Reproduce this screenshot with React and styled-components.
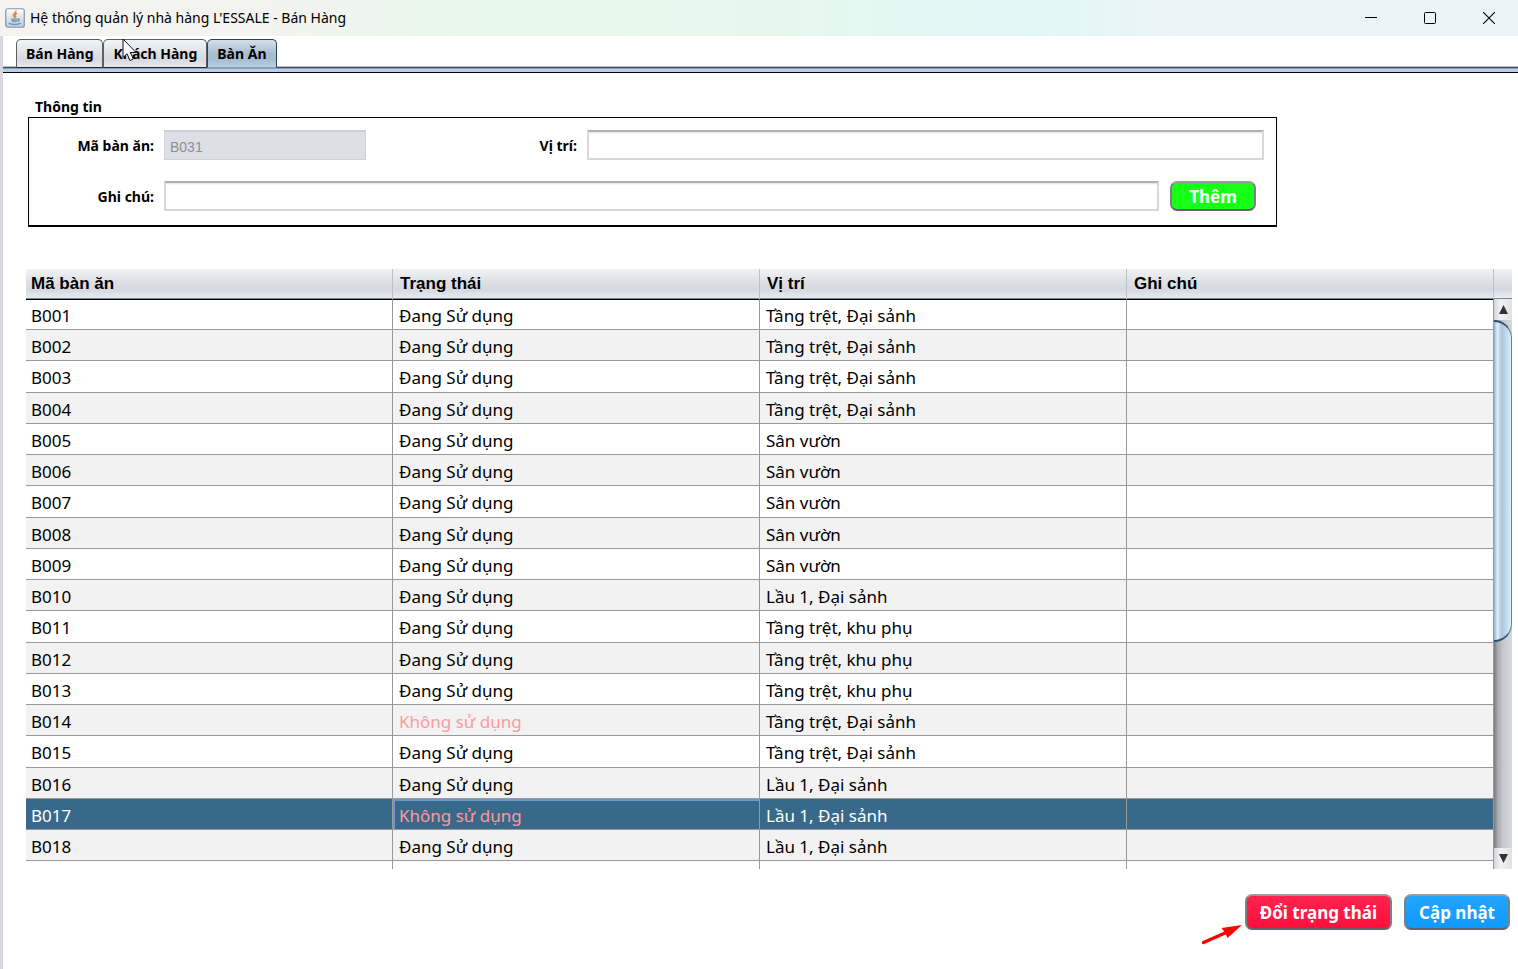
import React from 'react';
import styled, { createGlobalStyle } from 'styled-components';

const Global = createGlobalStyle`
  *, *::before, *::after { box-sizing: border-box; }
  body { margin: 0; background: #fff; color: #000; font-family: "Noto Sans", "Open Sans", sans-serif; }
  button, input { font-family: inherit; }
`;

const Window = styled.div`
  position: relative;
  display: flex;
  flex-direction: column;
  min-height: 100vh;
`;

const TitleBar = styled.header`
  display: flex;
  align-items: center;
  height: 36px;
  padding-left: 5px;
  background: linear-gradient(90deg, #f4f3f0 0%, #f3f3f0 18%, #e8f8ec 30%, #e6f8ee 52%, #e1f8f8 68%, #ebf4f8 77%, #ebf4f8 100%);
`;

const Title = styled.h1`
  flex: 1;
  margin: 0 0 0 5px;
  font-size: 14px;
  line-height: 20px;
  font-weight: 400;
  white-space: nowrap;
`;

const WindowButton = styled.button`
  display: flex;
  align-items: center;
  justify-content: center;
  width: 59px;
  height: 34px;
  padding: 0;
  border: 0;
  background: transparent;
`;

const Content = styled.main`
  flex: 1;
  display: flex;
  flex-direction: column;
  border-left: 3px solid #d6d9e1;
`;

const Tabs = styled.nav`
  display: flex;
  height: 37px;
  padding: 3px 0 0 13px;
  background: linear-gradient(#fff 0 30px, #b9bfc8 30px 31px, #3f4c5e 31px 32px, #8ca0b5 32px 33px, #b8cfe5 33px 36px, #000010 36px 37px);
`;

const Tab = styled.button`
  height: 29px;
  padding: 0 9px;
  border: 1px solid ${(p) => (p.$active ? '#2e4258' : '#5c5f68')};
  border-bottom-color: ${(p) => (p.$active ? '#8ca0b5' : '#20283a')};
  border-radius: 5px 5px 0 0;
  background: ${(p) => (p.$active
    ? 'linear-gradient(#d3e0ea, #a9bed1 50%, #a5bbce 70%, #b9d0e4)'
    : 'linear-gradient(#f3f4f6, #dfe0e5 50%, #d8d9df 70%, #e6e8ef)')};
  color: #000;
  font-size: 14px;
  line-height: 20px;
  font-weight: 700;
`;

const Fieldset = styled.fieldset`
  min-width: 0;
  margin: 24px 241px 0 25px;
  padding: 0;
  border: 0;
`;

const Legend = styled.legend`
  padding: 0 0 0 7px;
  font-size: 14px;
  line-height: 20px;
  font-weight: 700;
`;

const FormBody = styled.div`
  display: flex;
  flex-direction: column;
  gap: 21px;
  padding: 12px 0 14px;
  border: 1px solid #000;
  border-bottom-width: 2px;
`;

const FormRow = styled.div`
  display: flex;
  align-items: center;
  padding-right: ${(p) => p.$end}px;
`;

const Label = styled.label`
  flex: none;
  width: ${(p) => p.$width}px;
  margin-right: 10px;
  padding-top: 2px;
  text-align: right;
  font-size: 14px;
  line-height: 20px;
  font-weight: 700;
`;

const TextInput = styled.input`
  flex: ${(p) => (p.$width ? `0 0 ${p.$width}px` : '1')};
  min-width: 0;
  height: 30px;
  padding: 2px 5px 0;
  border: 2px solid #d8d8d8;
  border-top-color: #b0b0b0;
  background: linear-gradient(#e2e2e2, #fff 2px);
  font-size: 14px;

  &:disabled {
    border: 1px solid #cfd3d9;
    border-top: 2px solid #c9cdd4;
    background: #dce0e6;
    color: #8e8f91;
    font-family: "Liberation Sans", Arial, sans-serif;
  }
`;

const ActionButton = styled.button`
  height: ${(p) => p.$height}px;
  padding: 1px ${(p) => p.$pad}px 0;
  border: 2px solid;
  border-color: #9b9b9b #7d8187 #62666d;
  border-radius: 7px;
  background: ${(p) => p.$color};
  color: #fff;
  font-size: 17px;
  line-height: 20px;
  font-weight: 700;
  white-space: nowrap;
`;

const AddButton = styled(ActionButton)`
  width: 86px;
  margin-left: 11px;
`;

const TablePane = styled.section`
  display: flex;
  margin: 42px 6px 0 23px;
`;

const Table = styled.table`
  flex: 1;
  width: 100%;
  table-layout: fixed;
  border-collapse: separate;
  border-spacing: 0;
`;

const headerFill = 'linear-gradient(#f1f2f4, #dcdfe3 45%, #d5d9df 70%, #e9edf6)';

const HeadCell = styled.th`
  height: 31px;
  padding: 0 0 0 7px;
  border-right: 1px solid #bfc1c6;
  border-bottom: 1px solid #000;
  background: ${headerFill};
  box-shadow: inset 0 -1px #80848c;
  text-align: left;
  font-family: "Liberation Sans", Arial, sans-serif;
  font-size: 17px;
  line-height: 20px;
  font-weight: 700;

  &:first-child { padding-left: 5px; }
`;

const Row = styled.tr`
  height: 31px;
  background: ${(p) => (p.$selected ? '#39698a' : '#fff')};
  color: ${(p) => (p.$selected ? '#fff' : '#000')};

  &:first-child { height: 30px; }
  &:nth-child(4n + 3) { height: 32px; }
  &:nth-child(even) { background: #f2f2f2; }
`;

const Cell = styled.td`
  padding: 3px 0 0 6px;
  border-right: 1px solid #999;
  border-bottom: 1px solid #999;
  ${(p) => p.$unused && 'color: #fd9b9b;'}
  ${(p) => p.$focused && 'box-shadow: inset 2px 2px #6c99c9;'}
  font-size: 17px;
  line-height: 24px;
  white-space: nowrap;

  &:first-child { padding-left: 5px; }
`;

const FillerCell = styled.td`
  height: 8px;
  padding: 0;
  border-right: 1px solid #999;
`;

const ScrollColumn = styled.div`
  display: flex;
  flex-direction: column;
  width: 18px;
`;

const ScrollCap = styled.div`
  height: 30px;
  border-bottom: 1px solid #80848c;
  background: ${headerFill};
`;

const Track = styled.div`
  flex: 1;
  display: flex;
  flex-direction: column;
  background: linear-gradient(90deg, #77787e, #a9aab1 20%, #c6c7cf 50%, #d6d8e0);
`;

const ArrowButton = styled.button`
  display: flex;
  align-items: center;
  justify-content: center;
  height: 21px;
  padding: 0;
  border: 0;
  background: linear-gradient(90deg, #d3d5da, #f1f2f4 35%, #dfe1e5);
`;

const Thumb = styled.div`
  height: 322px;
  border: 2px solid #30506f;
  border-left: 0;
  border-right: 1px solid #6483a3;
  border-radius: 0 18px 18px 0;
  background: linear-gradient(90deg, #8fb0d0, #e4eef7 20%, #a9c4dd 45%, #b9d3e8 65%, #dceffa);
`;

const Spacer = styled.div`
  flex: 1;
`;

const Actions = styled.footer`
  display: flex;
  align-items: flex-start;
  gap: 12px;
  justify-content: flex-end;
  padding: 25px 8px 25px 0;
`;

const Pointed = styled.div`
  display: flex;
  gap: 2px;
`;

const RedArrow = styled.svg`
  margin-top: 28px;
`;

const Cursor = styled.svg`
  position: absolute;
  left: 122px;
  top: 38px;
`;

const JavaIcon = () => (
  <svg width="20" height="20" viewBox="0 0 20 20" aria-hidden="true">
    <defs>
      <linearGradient id="java" x1="0" y1="0" x2="0" y2="1">
        <stop offset="0" stopColor="#fdfdfd" />
        <stop offset="1" stopColor="#bccbd8" />
      </linearGradient>
    </defs>
    <rect x="0.75" y="0.75" width="18.5" height="18.5" rx="2" fill="url(#java)" stroke="#8496a6" strokeWidth="1.2" />
    <path d="M10.8 2.600c.8 2-3.600 3.200-2.300 5.200.4.8 1 1.200 1.300 1.900M12.200 5.300c-1.800.8-2.800 1.500-1.700 2.700.5.7.2 1.300-.4 1.800" fill="none" stroke="#e8853b" strokeWidth="1.500" />
    <path d="M6 10.600h6.500c0 2.200-.8 3.700-2.200 3.700H8.200C6.800 14.300 6 12.800 6 10.600z" fill="#7ba3c0" />
    <path d="M12.600 10.900c2.400-.3 2.100 2-.4 2.500M3.800 15c2.500 1.900 9 1.900 12 0" fill="none" stroke="#6b97b8" strokeWidth="1.400" />
  </svg>
);

const USED = 'Đang Sử dụng';
const UNUSED = 'Không sử dụng';
const GROUND = 'Tầng trệt, Đại sảnh';
const GARDEN = 'Sân vườn';
const ANNEX = 'Tầng trệt, khu phụ';
const FLOOR1 = 'Lầu 1, Đại sảnh';

const rows = [
  ['B001', USED, GROUND], ['B002', USED, GROUND], ['B003', USED, GROUND], ['B004', USED, GROUND],
  ['B005', USED, GARDEN], ['B006', USED, GARDEN], ['B007', USED, GARDEN], ['B008', USED, GARDEN], ['B009', USED, GARDEN],
  ['B010', USED, FLOOR1], ['B011', USED, ANNEX], ['B012', USED, ANNEX], ['B013', USED, ANNEX],
  ['B014', UNUSED, GROUND], ['B015', USED, GROUND], ['B016', USED, FLOOR1], ['B017', UNUSED, FLOOR1], ['B018', USED, FLOOR1],
];
const selected = 'B017';

export default function App() {
  return (
    <Window>
      <Global />
      <TitleBar>
        <JavaIcon />
        <Title>Hệ thống quản lý nhà hàng L'ESSALE - Bán Hàng</Title>
        <WindowButton aria-label="Thu nhỏ">
          <svg width="12" height="12"><path d="M0 5.500h12" stroke="#000" /></svg>
        </WindowButton>
        <WindowButton aria-label="Phóng to">
          <svg width="12" height="12"><rect x="0.5" y="0.5" width="11" height="11" rx="1" fill="none" stroke="#000" /></svg>
        </WindowButton>
        <WindowButton aria-label="Đóng">
          <svg width="12" height="12"><path d="M0 0l12 12M12 0L0 12" stroke="#000" strokeWidth="1.100" /></svg>
        </WindowButton>
      </TitleBar>
      <Content>
        <Tabs>
          <Tab>Bán Hàng</Tab>
          <Tab>Khách Hàng</Tab>
          <Tab $active>Bàn Ăn</Tab>
        </Tabs>
        <Fieldset>
          <Legend>Thông tin</Legend>
          <FormBody>
            <FormRow $end={12}>
              <Label htmlFor="code" $width={125}>Mã bàn ăn:</Label>
              <TextInput id="code" $width={202} defaultValue="B031" disabled />
              <Label htmlFor="place" $width={211}>Vị trí:</Label>
              <TextInput id="place" />
            </FormRow>
            <FormRow $end={20}>
              <Label htmlFor="note" $width={125}>Ghi chú:</Label>
              <TextInput id="note" />
              <AddButton $height={30} $pad={0} $color="#16ff16">Thêm</AddButton>
            </FormRow>
          </FormBody>
        </Fieldset>
        <TablePane>
          <Table>
            <thead>
              <tr>
                <HeadCell>Mã bàn ăn</HeadCell>
                <HeadCell>Trạng thái</HeadCell>
                <HeadCell>Vị trí</HeadCell>
                <HeadCell>Ghi chú</HeadCell>
              </tr>
            </thead>
            <tbody>
              {rows.map(([code, status, place]) => (
                <Row key={code} $selected={code === selected}>
                  <Cell>{code}</Cell>
                  <Cell $unused={status === UNUSED} $focused={code === selected}>{status}</Cell>
                  <Cell>{place}</Cell>
                  <Cell />
                </Row>
              ))}
            </tbody>
            <tfoot>
              <tr>
                <FillerCell /><FillerCell /><FillerCell /><FillerCell />
              </tr>
            </tfoot>
          </Table>
          <ScrollColumn>
            <ScrollCap />
            <Track>
              <ArrowButton aria-label="Cuộn lên">
                <svg width="9" height="9"><path d="M0 9L4.500 0L9 9z" fill="#333" /></svg>
              </ArrowButton>
              <Thumb />
              <Spacer />
              <ArrowButton aria-label="Cuộn xuống">
                <svg width="9" height="9"><path d="M0 0L4.500 9L9 0z" fill="#333" /></svg>
              </ArrowButton>
            </Track>
          </ScrollColumn>
        </TablePane>
        <Actions>
          <Pointed>
            <RedArrow width="42" height="24" viewBox="0 0 42 24" aria-hidden="true">
              <path d="M2.500 20.500L24 11" stroke="#f00" strokeWidth="3.500" strokeLinecap="round" />
              <path d="M41 3L20.500 6L24 10.500L26.500 16z" fill="#f00" />
            </RedArrow>
            <ActionButton $height={36} $pad={13} $color="linear-gradient(#ff2350, #ff0f3c)">Đổi trạng thái</ActionButton>
          </Pointed>
          <ActionButton $height={36} $pad={13} $color="linear-gradient(#22a5ff, #0f9aff)">Cập nhật</ActionButton>
        </Actions>
      </Content>
      <Cursor width="16" height="26" viewBox="0 0 16 26" aria-hidden="true">
        <path d="M1 1v18.500l4-3.800 3 6.800 3.300-1.500-3-6.500h5.700z" fill="#fff" stroke="#111" strokeWidth="1" />
      </Cursor>
    </Window>
  );
}
